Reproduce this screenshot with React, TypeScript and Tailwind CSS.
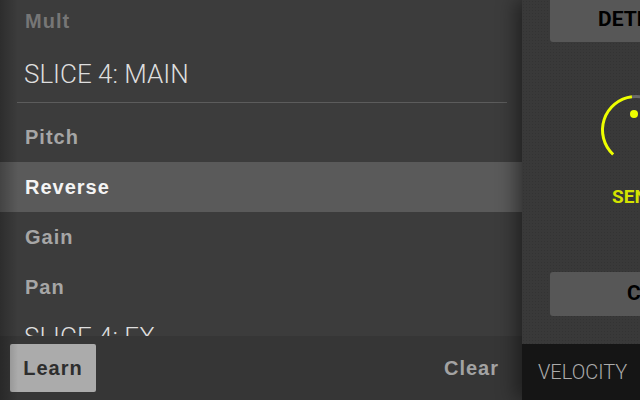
import React from "react";

const rows = [
  { label: "Pitch", active: false },
  { label: "Reverse", active: true },
  { label: "Gain", active: false },
  { label: "Pan", active: false },
];

function Knob() {
  // center (40,40), r 33.5 — arc from 135deg clockwise, value ~47%
  const cx = 40;
  const cy = 40;
  const r = 33.5;
  const pt = (deg: number) => {
    const a = (deg * Math.PI) / 180;
    return `${(cx + r * Math.cos(a)).toFixed(2)} ${(cy + r * Math.sin(a)).toFixed(2)}`;
  };
  return (
    <svg width="80" height="80" viewBox="0 0 80 80" className="ml-[74px] mt-[48px] shrink-0">
      <path d={`M ${pt(263)} A ${r} ${r} 0 0 1 ${pt(405)}`} fill="none" stroke="#6a6a6a" strokeWidth="3" />
      <path d={`M ${pt(133)} A ${r} ${r} 0 0 1 ${pt(263)}`} fill="none" stroke="#eeff00" strokeWidth="3" />
      <circle cx="38" cy="24" r="4" fill="#eeff00" />
    </svg>
  );
}

export default function App() {
  return (
    <div className="w-[640px] h-[400px] overflow-hidden flex bg-[#3c3c3c] font-['Liberation_Sans',Arial,sans-serif]">
      {/* LEFT: MIDI learn list */}
      <div className="relative w-[522px] h-full flex flex-col shrink-0">
        <div className="flex-1 overflow-hidden">
          <div className="mt-[-4px] h-[50px] flex items-center pl-[25px] text-[20px] font-bold tracking-[1px] text-[#767676]">
            Mult
          </div>
          <div className="h-[56px] flex items-center pl-[24px] font-['Roboto',sans-serif] font-light text-[26px] text-[#dedede]">
            SLICE 4: MAIN
          </div>
          <div className="ml-[17px] mr-[15px] h-px bg-[#5c5c5c]"></div>
          <div className="mt-[9px]">
            {rows.map((row) => (
              <div
                key={row.label}
                className={`h-[50px] flex items-center pl-[25px] text-[20px] font-bold tracking-[1px] ${
                  row.active ? "bg-[#5a5a5a] text-[#f4f4f4]" : "text-[#a6a6a6]"
                }`}
              >
                {row.label}
              </div>
            ))}
          </div>
          <div className="h-[50px] flex items-center pl-[24px] font-['Roboto',sans-serif] font-light text-[26px] text-[#dedede]">
            SLICE 4: FX
          </div>
        </div>
        <div className="h-[64px] bg-[#363636] flex items-center justify-between pl-[10px] pr-[23px]">
          <button className="w-[86px] h-[48px] rounded-[2px] bg-[#ababab] text-[#2e2e2e] text-[20px] font-bold tracking-[1px]">
            Learn
          </button>
          <span className="text-[20px] font-bold tracking-[1px] text-[#a3a3a3]">Clear</span>
        </div>
        <div className="pointer-events-none absolute inset-y-0 left-0 w-[18px] bg-gradient-to-r from-black/25 to-transparent"></div>
      </div>

      {/* RIGHT: slice detect panel */}
      <div className="relative z-10 w-[118px] h-full shrink-0 flex flex-col bg-[#393939] bg-[radial-gradient(circle,#333333_1px,transparent_1px)] bg-[length:3px_3px] shadow-[-6px_0_18px_rgba(0,0,0,0.45)] font-['Roboto',sans-serif]">
        <div className="ml-[28px] mt-[-6px] h-[48px] w-[180px] shrink-0 rounded-[3px] bg-[#575757] flex items-center pl-[48px] pt-[4px] text-[21px] font-bold text-black">
          DETECT
        </div>
        <Knob />
        <div className="ml-[90px] mt-[16px] h-[22px] leading-[22px] whitespace-nowrap text-[19px] font-bold text-[#d4e300]">
          SENS
        </div>
        <div className="ml-[28px] mt-[64px] h-[44px] w-[180px] shrink-0 rounded-[3px] bg-[#575757] flex items-center pl-[77px] text-[21px] font-bold text-black">
          CLEAR
        </div>
        <div className="flex-1"></div>
        <div className="h-[56px] w-[118px] bg-[#151515] flex items-center pl-[16px] whitespace-nowrap text-[20px] font-light text-[#ababab]">
          VELOCITY
        </div>
      </div>
    </div>
  );
}
